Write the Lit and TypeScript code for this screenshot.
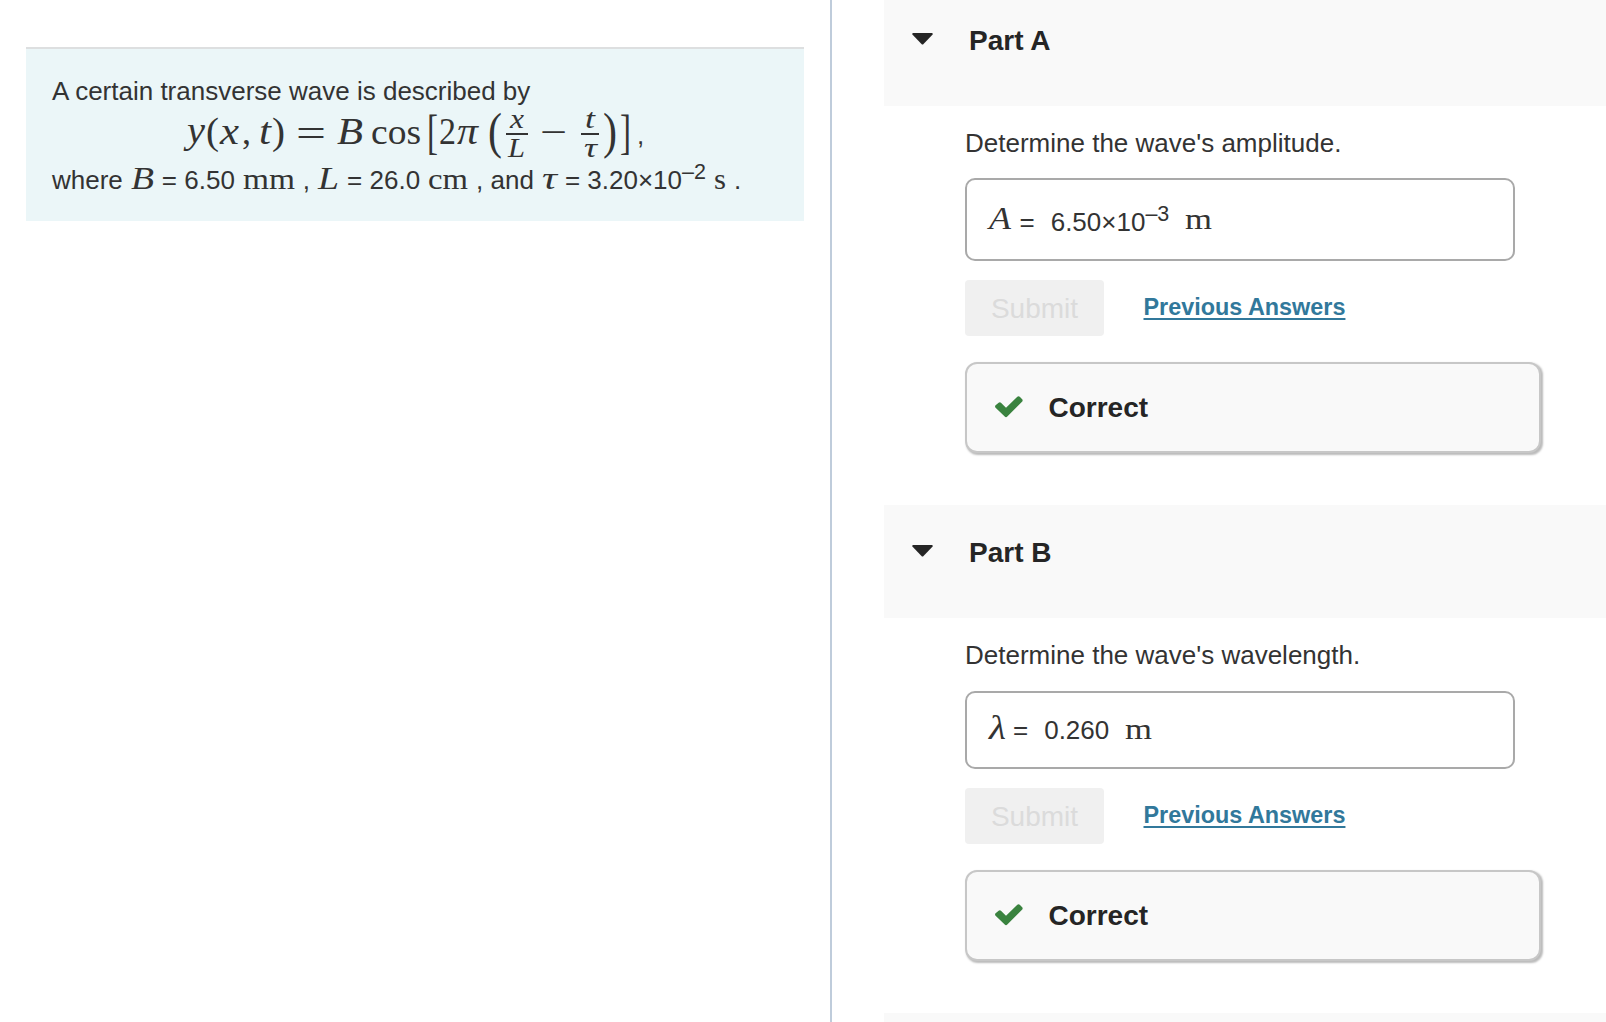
import { css, html, LitElement, svg, TemplateResult } from "lit";
import { customElement, property } from "lit/decorators.js";

// inline math symbol, stretched to the given width
const sym = (text: string, width: number, size: number, italic = true) => html`
  <svg class="sym ${italic ? "it" : ""}" width=${width} height="16">
    <text y="16" font-size=${size} textLength=${width} lengthAdjust="spacingAndGlyphs">${text}</text>
  </svg>`;

// symbol inside the displayed formula
const put = (text: string, x: number, y: number, width: number, size: number, cls = "it") => svg`
  <text class=${cls} x=${x} y=${y} font-size=${size} textLength=${width} lengthAdjust="spacingAndGlyphs">${text}</text>`;

// tall square bracket
const bracket = (text: string, x: number) => svg`
  <text class="rm" font-size="33" transform="translate(${x} 148) scale(1 1.49)">${text}</text>`;

const mathStyles = css`
  .sym,
  .formula {
    font-family: "Liberation Serif", serif;
    fill: #333;
    overflow: visible;
  }
  .it {
    font-style: italic;
  }
  .rm {
    font-style: normal;
  }
  .sans {
    font-family: "Liberation Sans", Arial, sans-serif;
  }
  .sup {
    font-size: 21.5px;
    line-height: 0;
    position: relative;
    top: -10px;
  }
`;

@customElement("wave-problem")
export class WaveProblem extends LitElement {
  static styles = [
    mathStyles,
    css`
      :host {
        display: block;
        box-sizing: border-box;
        height: 174px;
        padding: 27px 26px 0;
        border-top: 2px solid #dddfe0;
        background: #ebf6f8;
        white-space: nowrap;
      }
      .line {
        height: 30px;
        line-height: 30px;
      }
      .formula {
        display: block;
        margin-left: 133px;
      }
      .values {
        display: flex;
        align-items: baseline;
        height: 30px;
        line-height: 30px;
        margin-top: 3px;
      }
      .values .sym {
        margin: 0 8px;
      }
      .values .unit {
        margin: 0 8px;
      }
      .values .unit .sym {
        margin: 0;
      }
    `,
  ];

  render() {
    return html`
      <div class="line">A certain transverse wave is described by</div>
      <svg class="formula" width="460" height="56" viewBox="185 106 460 56">
        ${put("y", 187, 143, 18, 37)} ${put("(", 206, 144, 13, 38, "rm")}
        ${put("x", 220, 144, 19, 37)} ${put(",", 242, 144, 9, 36, "rm")}
        ${put("t", 259, 144, 12, 38)} ${put(")", 272, 144, 13, 38, "rm")}
        ${put("=", 296, 146, 30, 38, "rm")} ${put("B", 337, 144, 26, 38)}
        ${put("cos", 371, 144, 50, 36, "rm")} ${bracket("[", 427)}
        ${put("2", 439, 144, 17, 38, "rm")} ${put("π", 457, 144, 21, 38)}
        ${put("(", 488, 148, 14, 50, "rm")} ${put("x", 510, 128, 14, 27)}
        ${put("L", 508, 157, 17, 27)} ${put("−", 540, 145, 27, 38, "rm")}
        ${put("t", 585, 128, 10, 27)} ${put("τ", 584, 157, 13, 27)}
        ${put(")", 603, 148, 14, 50, "rm")} ${bracket("]", 620)}
        ${put(",", 637, 144, 7.2, 26, "rm sans")}
        <path d="M506 134h22M581 134h18" stroke="#333" stroke-width="2" />
      </svg>
      <div class="values">
        <span>where</span>${sym("B", 23, 32)}<span>= 6.50</span>
        <span class="unit">${sym("mm", 52, 30, false)}</span><span>,</span>
        ${sym("L", 21, 32)}<span>= 26.0</span>
        <span class="unit">${sym("cm", 40, 30, false)}</span><span>, and</span>
        ${sym("τ", 15, 32)}<span>= 3.20×10<span class="sup">–2</span></span>
        <span class="unit">${sym("s", 12, 30, false)}</span><span>.</span>
      </div>
    `;
  }
}

@customElement("problem-part")
export class ProblemPart extends LitElement {
  @property() label = "";
  @property() question = "";
  @property({ attribute: false }) answer?: TemplateResult;

  static styles = [
    mathStyles,
    css`
      :host {
        display: block;
      }
      .head {
        display: flex;
        align-items: center;
        box-sizing: border-box;
        height: 113px;
        padding: 0 0 17px 28px;
        background: #f9f9f9;
        color: #252525;
        font-size: 28px;
        font-weight: bold;
      }
      .caret {
        width: 21px;
        height: 12px;
        margin: 0 36px 4px 0;
        fill: #252525;
      }
      .body {
        padding: 22px 0 52px 81px;
      }
      .question {
        height: 50px;
        line-height: 30px;
      }
      .answer {
        display: flex;
        align-items: baseline;
        box-sizing: border-box;
        width: 550px;
        height: 78px;
        margin-top: 1px;
        padding: 22px 22px 0;
        border: 2px solid #a9a9a9;
        border-radius: 10px;
        line-height: 30px;
      }
      .answer.tall {
        height: 83px;
        margin-top: 0;
        padding-top: 27px;
      }
      .answer.tall .sym {
        transform: translateY(-2px);
      }
      .equals {
        margin: 0 16px 0 7px;
      }
      .tall .equals {
        margin-left: 8.5px;
      }
      .unit {
        margin-left: 16px;
      }
      .actions {
        display: flex;
        align-items: center;
        gap: 39.5px;
        margin: 19px 0 26px;
      }
      .submit {
        width: 139px;
        height: 56px;
        padding: 2px 0 0;
        border: 0;
        border-radius: 4px;
        background: #f0f0f0;
        color: #dbdbdb;
        font: 28px "Liberation Sans", Arial, sans-serif;
      }
      .previous {
        margin-bottom: 2px;
        color: #31789b;
        font-size: 23.4px;
        font-weight: bold;
        text-decoration: underline;
        text-decoration-thickness: 2px;
        text-underline-offset: 3px;
        text-decoration-skip-ink: none;
      }
      .result {
        display: flex;
        align-items: center;
        box-sizing: border-box;
        width: 576px;
        height: 91px;
        padding-left: 28px;
        border: 2px solid #c7c7c7;
        border-radius: 12px;
        box-shadow: 1.5px 1.5px 2px #bbb;
        background: #f9f9f9;
        color: #252525;
        font-size: 28px;
        font-weight: bold;
      }
      .check {
        width: 28px;
        height: 22px;
        margin: 0 25.5px 2px 0;
        fill: #3a833f;
      }
    `,
  ];

  render() {
    return html`
      <div class="head">
        <svg class="caret" viewBox="0 0 21 12">
          <path d="M1 0H20Q21.400 .6 20.400 1.800L11.500 11Q10.500 12 9.500 11L.6 1.800Q-.4 .6 1 0Z" />
        </svg>
        <span>${this.label}</span>
      </div>
      <div class="body">
        <div class="question">${this.question}</div>
        ${this.answer}
        <div class="actions">
          <button class="submit" disabled>Submit</button>
          <a class="previous">Previous Answers</a>
        </div>
        <div class="result">
          <svg class="check" viewBox="0 0 28 22">
            <path
              d="M.6 9.200L3.600 6.800Q5 5.800 6.200 7L11 11.700L22.300 .8Q23.700 -.3 25 .9L27.200 3.300Q28.200 4.600 27 5.800L12.300 20.600Q11 21.800 9.700 20.600L.6 11.700Q-.5 10.400 .6 9.200Z"
            />
          </svg>
          <span>Correct</span>
        </div>
      </div>
    `;
  }
}

@customElement("app-root")
export class AppRoot extends LitElement {
  static styles = css`
    :host {
      display: flex;
      box-sizing: border-box;
      width: 100%;
      height: 100vh;
      overflow: hidden;
      background: #fff;
      color: #333;
      font: 26px "Liberation Sans", Arial, sans-serif;
    }
    .left {
      box-sizing: border-box;
      width: 832px;
      padding: 47px 26px 0;
      border-right: 2px solid #bfccdb;
    }
    /* scrolled slightly past the top of the first part */
    .right {
      flex: 1;
      margin: -7px 0 0 52px;
    }
    .next {
      height: 113px;
      background: #f9f9f9;
    }
  `;

  render() {
    return html`
      <div class="left"><wave-problem></wave-problem></div>
      <div class="right">
        <problem-part
          label="Part A"
          question="Determine the wave's amplitude."
          .answer=${html`
            <div class="answer tall">
              ${sym("A", 22, 32)}<span class="equals">=</span>
              <span>6.50×10<span class="sup">–3</span></span>
              <span class="unit">${sym("m", 27, 30, false)}</span>
            </div>
          `}
        ></problem-part>
        <problem-part
          label="Part B"
          question="Determine the wave's wavelength."
          .answer=${html`
            <div class="answer">
              ${sym("λ", 17, 34)}<span class="equals">=</span>
              <span>0.260</span>
              <span class="unit">${sym("m", 27, 30, false)}</span>
            </div>
          `}
        ></problem-part>
        <div class="next"></div>
      </div>
    `;
  }
}
